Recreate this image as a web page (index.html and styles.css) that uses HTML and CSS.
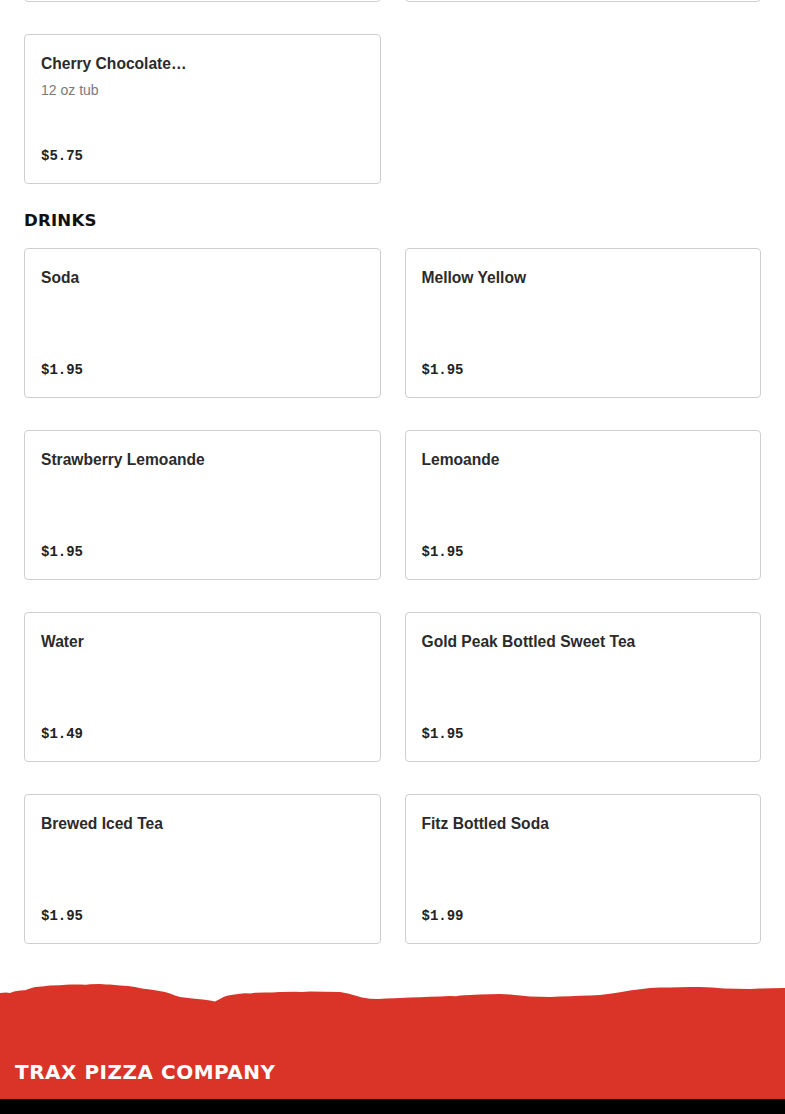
FILE: index.html
```html
<!DOCTYPE html>
<html lang="en">
<head>
<meta charset="utf-8">
<title>Trax Pizza Company — Menu</title>
<link rel="stylesheet" href="styles.css">
</head>
<body>
<main class="menu">
  <section class="section section-scrolled">
    <div class="grid">
      <article class="card card-offscreen"></article>
      <article class="card card-offscreen"></article>
      <article class="card">
        <div class="card-top"><h3 class="card-title">Cherry Chocolate…</h3><p class="card-desc">12 oz tub</p></div>
        <span class="card-price">$5.75</span>
      </article>
    </div>
  </section>

  <section class="section">
    <h2 class="section-title">DRINKS</h2>
    <div class="grid">
      <article class="card">
        <div class="card-top"><h3 class="card-title">Soda</h3></div>
        <span class="card-price">$1.95</span>
      </article>
      <article class="card">
        <div class="card-top"><h3 class="card-title">Mellow Yellow</h3></div>
        <span class="card-price">$1.95</span>
      </article>
      <article class="card">
        <div class="card-top"><h3 class="card-title">Strawberry Lemoande</h3></div>
        <span class="card-price">$1.95</span>
      </article>
      <article class="card">
        <div class="card-top"><h3 class="card-title">Lemoande</h3></div>
        <span class="card-price">$1.95</span>
      </article>
      <article class="card">
        <div class="card-top"><h3 class="card-title">Water</h3></div>
        <span class="card-price">$1.49</span>
      </article>
      <article class="card">
        <div class="card-top"><h3 class="card-title">Gold Peak Bottled Sweet Tea</h3></div>
        <span class="card-price">$1.95</span>
      </article>
      <article class="card">
        <div class="card-top"><h3 class="card-title">Brewed Iced Tea</h3></div>
        <span class="card-price">$1.95</span>
      </article>
      <article class="card">
        <div class="card-top"><h3 class="card-title">Fitz Bottled Soda</h3></div>
        <span class="card-price">$1.99</span>
      </article>
    </div>
  </section>
</main>

<footer class="footer">
  <svg class="footer-edge" viewBox="0 980 785 24" preserveAspectRatio="none" aria-hidden="true">
    <path fill="#d93427" d="M0 993 L6 992.6 L10 992.9 L14 991.5 L20 990.6 L25 990.2 L30 988.6 L35 987 L42 986.4 L46 985.9 L50 985.6 L60 985.3 L66 984.8 L70 984.6 L80 984.4 L86 984.7 L90 984.2 L100 984 L106 984.4 L110 984.6 L120 985.4 L128 986 L135 987 L142 988.6 L150 989.6 L155 990.2 L158 990.8 L165 992 L170 993.6 L175 995.4 L180 997 L188 998 L195 998.8 L200 999.2 L203 999.6 L210 1000.6 L215 1001.4 L219 999.4 L223 997.2 L227 995.8 L231 995 L238 994 L245 993.2 L250 993.4 L255 992.8 L265 992.4 L272 992.6 L280 992 L295 991.8 L302 992.1 L310 991.6 L325 991.8 L340 992 L348 993.6 L355 995.6 L362 997.4 L370 998.8 L378 999 L386 998.4 L394 998.2 L400 998 L410 997.6 L420 997.2 L430 996.8 L440 996.4 L450 996 L456 996.3 L460 995.4 L470 995 L480 994.6 L490 994.2 L500 994 L510 994.6 L520 995.6 L530 996.4 L540 996.8 L550 997 L560 996.6 L570 996.2 L580 995.8 L590 995.4 L600 995 L610 993.8 L620 992.2 L630 990.6 L640 989.2 L650 988 L660 987.6 L670 987.4 L680 987.2 L690 987 L700 987 L712 987.6 L724 988.4 L736 988.8 L750 989 L760 988.6 L772 988.2 L785 988 L785 1004 L0 1004 Z"/>
  </svg>
  <div class="footer-body">
    <p class="footer-brand">TRAX PIZZA COMPANY</p>
  </div>
  <div class="footer-bar"></div>
</footer>
</body>
</html>
```

FILE: styles.css
```css
* {
  box-sizing: border-box;
}

html, body {
  margin: 0;
  padding: 0;
  background: #ffffff;
}

body {
  font-family: "Liberation Sans", Arial, sans-serif;
  color: #2a2a2a;
}

.menu {
  padding: 0 24px;
}

.section-scrolled {
  margin-top: -148px;
}

.section-title {
  margin: 25px 0 15px;
  font-family: "DejaVu Sans", "Liberation Sans", sans-serif;
  font-weight: 700;
  font-size: 16.6px;
  line-height: 24px;
  letter-spacing: 0.2px;
  color: #111111;
}

.grid {
  display: grid;
  grid-template-columns: 1fr 1fr;
  column-gap: 24px;
  row-gap: 32px;
}

.card {
  height: 150px;
  border: 1px solid #cfcfcf;
  border-radius: 4px;
  padding: 17px 16px 15px;
  display: flex;
  flex-direction: column;
  justify-content: space-between;
  background: #ffffff;
}

.card-title {
  margin: 0;
  font-size: 15.6px;
  font-weight: 700;
  line-height: 24px;
  color: #2b2b2b;
}

.card-desc {
  margin: 4px 0 0;
  font-size: 14px;
  line-height: 20px;
  color: #7a7a7a;
}

.card-price {
  font-family: "Liberation Mono", "Courier New", monospace;
  font-size: 14px;
  font-weight: 700;
  line-height: 24px;
  color: #222222;
}

.footer {
  margin-top: 36px;
}

.footer-edge {
  display: block;
  width: 100%;
  height: 24px;
}

.footer-body {
  background: #d93427;
  padding: 54px 15px 13px;
}

.footer-brand {
  margin: 0;
  font-family: "DejaVu Sans", "Liberation Sans", sans-serif;
  font-weight: 700;
  font-size: 20px;
  line-height: 28px;
  letter-spacing: 0.5px;
  color: #ffffff;
}

.footer-bar {
  background: #000000;
  height: 40px;
}
```
